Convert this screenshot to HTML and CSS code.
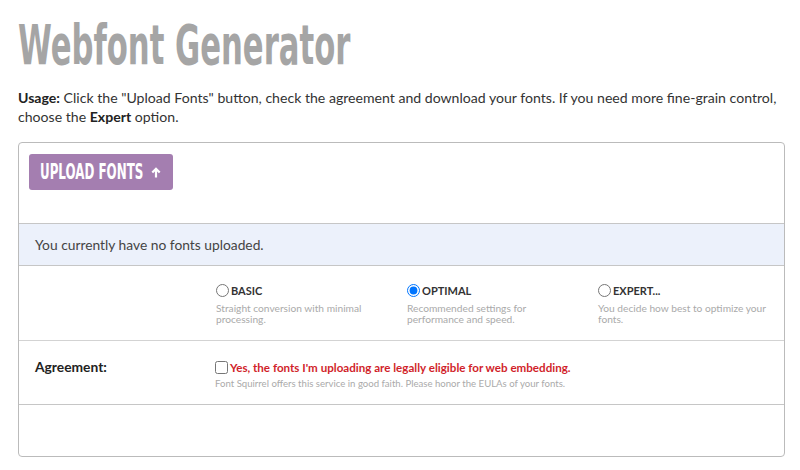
FILE: index.html
```html
<!DOCTYPE html>
<html>
<head>
<meta charset="utf-8">
<link rel="stylesheet" href="styles.css">
</head>
<body>
<div class="page">
  <h1 class="title"><span class="title-text">Webfont Generator</span></h1>
  <p class="usage"><b>Usage:</b> Click the "Upload Fonts" button, check the agreement and download your fonts. If you need more fine-grain control, choose the <b>Expert</b> option.</p>
  <div class="box">
    <div class="upload-row">
      <button class="upload-btn"><span class="btn-label"><span class="btn-text">UPLOAD FONTS</span></span><svg class="arrow" width="10" height="11" viewBox="0 0 10 11"><path d="M5 10.5V2M1.3 5.6L5 1.8L8.7 5.6" fill="none" stroke="#fff" stroke-width="2.2"/></svg></button>
    </div>
    <div class="status">You currently have no fonts uploaded.</div>
    <div class="options">
      <div class="opt-label"></div>
      <label class="opt">
        <span class="opt-head"><input type="radio" name="mode" class="radio"><span class="opt-name">BASIC</span></span>
        <span class="opt-desc">Straight conversion with minimal processing.</span>
      </label>
      <label class="opt">
        <span class="opt-head"><input type="radio" name="mode" class="radio" checked><span class="opt-name">OPTIMAL</span></span>
        <span class="opt-desc">Recommended settings for performance and speed.</span>
      </label>
      <label class="opt">
        <span class="opt-head"><input type="radio" name="mode" class="radio"><span class="opt-name">EXPERT...</span></span>
        <span class="opt-desc">You decide how best to optimize your fonts.</span>
      </label>
    </div>
    <div class="agree">
      <div class="agree-label">Agreement:</div>
      <div class="agree-body">
        <label class="agree-head"><input type="checkbox" class="check"><span class="agree-text">Yes, the fonts I'm uploading are legally eligible for web embedding.</span></label>
        <div class="agree-note">Font Squirrel offers this service in good faith. Please honor the EULAs of your fonts.</div>
      </div>
    </div>
    <div class="empty"></div>
  </div>
</div>
</body>
</html>
```

FILE: styles.css
```css
html, body {
  margin: 0;
  padding: 0;
  background: #fff;
}
.page {
  padding: 0 15px 0 18px;
  font-family: Lato, "Liberation Sans", sans-serif;
  color: #333;
}
.title {
  margin: 0;
  padding-top: 12px;
  height: 66px;
  font-family: "DejaVu Sans Condensed", "DejaVu Sans", sans-serif;
  font-weight: bold;
  font-size: 55px;
  line-height: 66px;
  color: #a5a5a5;
  white-space: nowrap;
}
.title-text {
  display: inline-block;
  transform: scaleX(0.62);
  transform-origin: left center;
}
.usage {
  margin: 10px 0 0;
  font-size: 14.1px;
  line-height: 19px;
  color: #333;
}
.usage b {
  color: #222;
}
.box {
  margin-top: 16px;
  width: 765px;
  border: 1px solid #bbb;
  border-radius: 4px;
}
.upload-row {
  height: 80px;
  padding: 11px 0 0 10px;
  box-sizing: border-box;
}
.upload-btn {
  display: flex;
  align-items: center;
  height: 36px;
  width: 144px;
  padding: 0 0 0 11px;
  border: none;
  border-radius: 3px;
  background: #a47eb0;
  color: #fff;
  font-family: "DejaVu Sans Condensed", "DejaVu Sans", sans-serif;
  font-weight: bold;
  font-size: 20.5px;
}
.btn-label {
  display: block;
  width: 102px;
  margin-right: 9px;
  height: 24px;
  line-height: 24px;
  text-align: left;
}
.btn-text {
  display: inline-block;
  transform: scaleX(0.645);
  transform-origin: left center;
  white-space: nowrap;
}
.arrow {
  display: block;
}
.status {
  height: 43px;
  box-sizing: border-box;
  border-top: 1px solid #c6c6c6;
  border-bottom: 1px solid #c6c6c6;
  background: #ecf1fb;
  padding-left: 16px;
  display: flex;
  align-items: center;
  font-size: 13.8px;
  color: #444;
}
.options {
  height: 75px;
  box-sizing: border-box;
  border-bottom: 1px solid #d3d3d3;
  display: grid;
  grid-template-columns: 197px 191px 191px 1fr;
  padding-top: 17px;
}
.opt {
  display: flex;
  flex-direction: column;
}
.opt-head {
  display: flex;
  align-items: center;
  height: 15px;
}
.radio {
  margin: 0 2px 0 0;
  width: 13px;
  height: 13px;
}
.opt-name {
  font-size: 11px;
  font-weight: bold;
  color: #333;
}
.opt-desc {
  margin-top: 5px;
  width: 170px;
  font-size: 10.2px;
  line-height: 11px;
  color: #aaa;
}
.agree {
  height: 64px;
  box-sizing: border-box;
  border-bottom: 1px solid #c6c6c6;
  display: grid;
  grid-template-columns: 196px 1fr;
  padding-top: 17px;
}
.agree-label {
  padding-left: 16px;
  font-size: 13.8px;
  font-weight: bold;
  color: #222;
  line-height: 18px;
}
.agree-head {
  display: flex;
  align-items: center;
  height: 18px;
}
.check {
  margin: 0 2px 0 0;
  width: 13px;
  height: 13px;
}
.agree-text {
  font-size: 11.6px;
  font-weight: bold;
  color: #d11f2b;
}
.agree-note {
  margin-top: 2px;
  font-size: 9.6px;
  color: #aaa;
}
.empty {
  height: 51px;
}
```
